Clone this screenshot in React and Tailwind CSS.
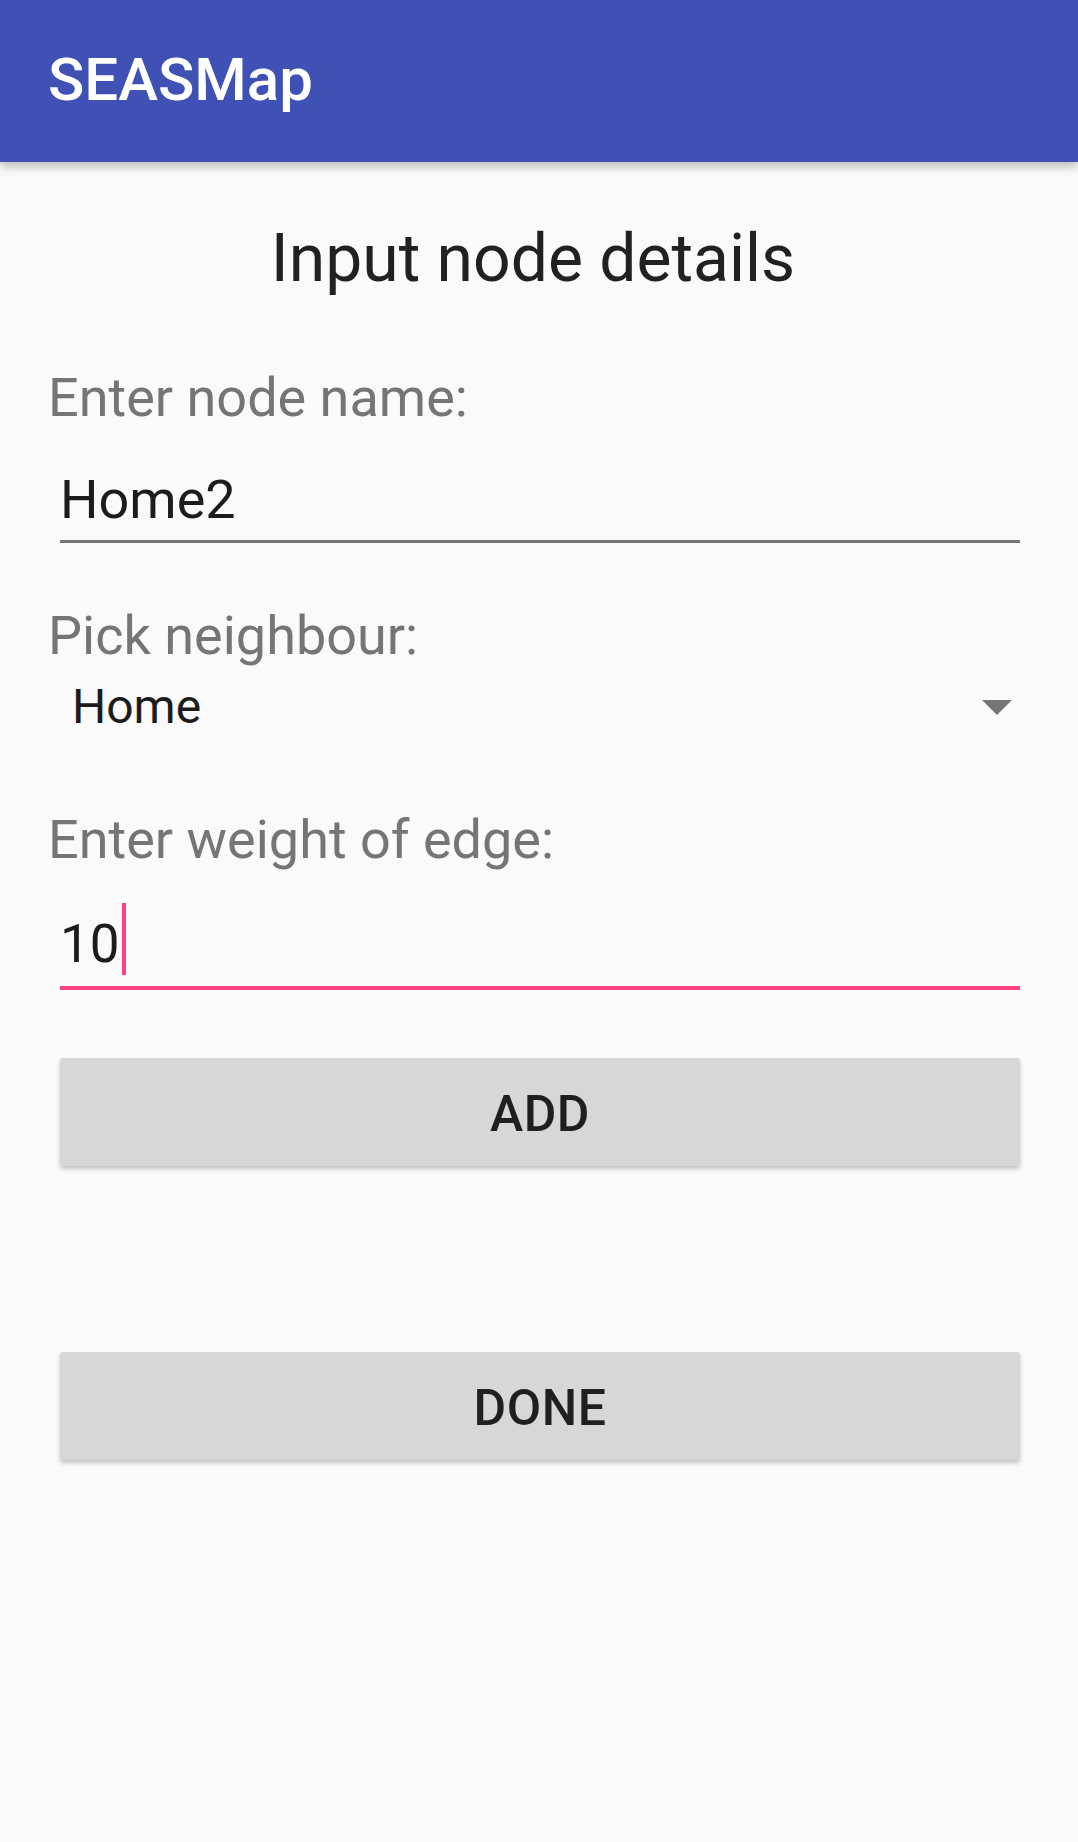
const FONT = { fontFamily: 'Roboto, "Noto Sans", sans-serif' }

function Label({ children, className = '' }) {
  return (
    <div className={`text-[54px] leading-[64px] text-[#757575] ${className}`}>{children}</div>
  )
}

function RaisedButton({ children, className = '' }) {
  return (
    <div
      className={`mx-[12px] h-[108px] flex items-center justify-center pt-[5px] rounded-[3px] bg-[#d6d7d7] shadow-[0_3px_4px_rgba(0,0,0,0.22)] ${className}`}
    >
      <span className="text-[50px] font-medium tracking-[0.5px] text-[#1f1f1f]">{children}</span>
    </div>
  )
}

export default function App() {
  return (
    <div className="w-[1078px] min-h-[1842px] bg-[#fafafa]" style={FONT}>
      {/* toolbar */}
      <div className="relative z-10 h-[162px] bg-[#3f51b5] flex items-center pl-[48px] pb-[3px] shadow-[0_4px_10px_rgba(0,0,0,0.28)]">
        <span className="text-[60px] font-medium text-white">SEASMap</span>
      </div>

      <div className="pl-[48px] pr-[46px]">
        <div className="mt-[57px] mr-[14px] text-center text-[66px] leading-[80px] text-[#212121]">
          Input node details
        </div>

        <Label className="mt-[67px]">Enter node name:</Label>
        <div className="mx-[12px] mt-[39px] pb-[9px] border-b-[3px] border-[#757575]">
          <div className="text-[54px] leading-[62px] text-[#1c1c1c]">Home2</div>
        </div>

        <Label className="mt-[61px]">Pick neighbour:</Label>
        <div className="mt-[12px] h-[54px] flex items-center justify-between pl-[24px] pr-[20px]">
          <span className="text-[48px] leading-[54px] text-[#1c1c1c]">Home</span>
          <svg width="30" height="15" viewBox="0 0 30 15">
            <polygon points="0,0 30,0 15,15" fill="#757575" />
          </svg>
        </div>

        <Label className="mt-[74px]">Enter weight of edge:</Label>
        <div className="mx-[12px] mt-[31px] pb-[11px] border-b-[4px] border-[#ff4081]">
          <div className="flex items-end">
            <span className="text-[53px] leading-[62px] text-[#1c1c1c]">10</span>
            <div className="w-[4px] h-[72px] ml-[2px] bg-[#ff4081]" />
          </div>
        </div>

        <RaisedButton className="mt-[68px]">ADD</RaisedButton>
        <RaisedButton className="mt-[186px]">DONE</RaisedButton>
      </div>
    </div>
  )
}
